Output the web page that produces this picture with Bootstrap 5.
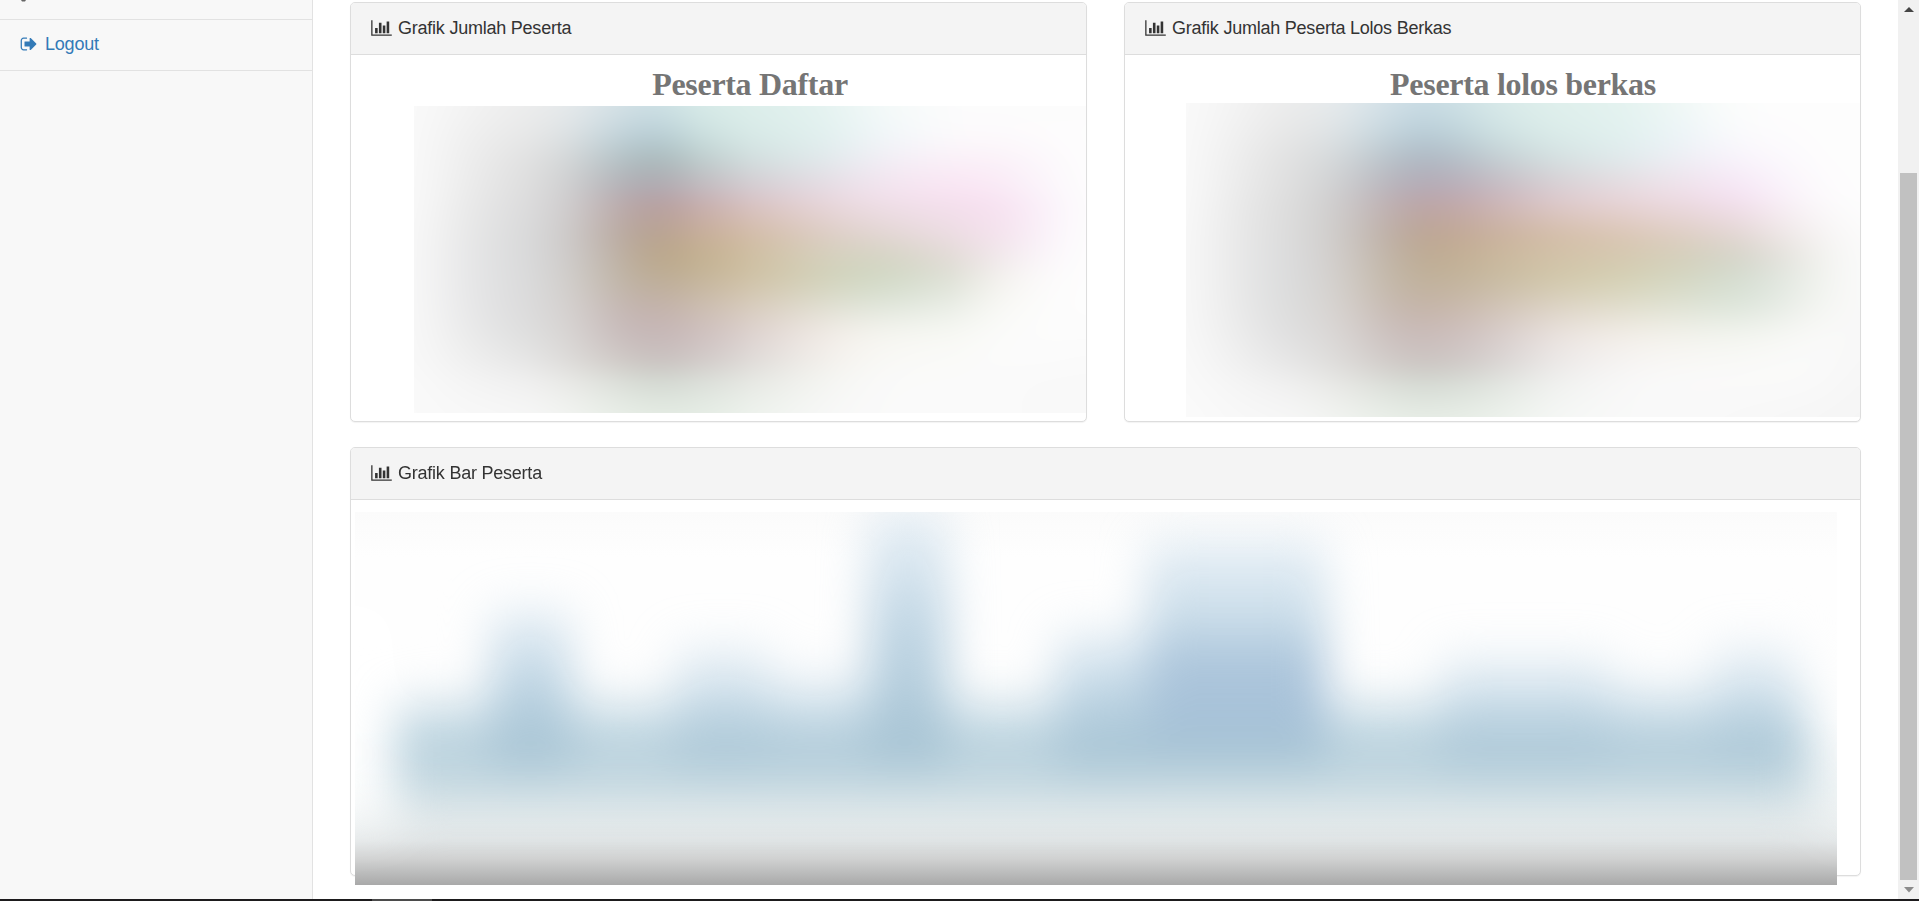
<!DOCTYPE html>
<html lang="id">
<head>
<meta charset="utf-8">
<title>Grafik Peserta</title>
<link href="https://cdn.jsdelivr.net/npm/bootstrap@5.3.0/dist/css/bootstrap.min.css" rel="stylesheet">
<style>
body{font-family:"Liberation Sans",Arial,sans-serif;font-size:18px;line-height:26px;color:#333;background:#fff;height:901px}
svg,canvas{display:block}
.side{width:313px;background:#f8f8f8;border-right:1px solid #e2e2e2}
.side .cell{border-bottom:1px solid #e2e2e2}
.side .prev{height:20px;padding-left:21px}
.side .out{height:51px;padding:0 0 3px 20px;color:#337ab7;gap:7px;letter-spacing:-.2px}
.page{padding:2px 36px 0 37px}
.panels{gap:25px 37px;grid-template-columns:737px 737px}
.panel{border:1px solid #ddd;border-radius:5px;box-shadow:0 1px 1px rgba(0,0,0,.05);height:420px;background:#fff}
.panel-top{height:52px;background:#f4f4f4;border-bottom:1px solid #ddd;border-radius:4px 4px 0 0;padding:0 20px 2px;gap:6px;letter-spacing:-.23px}
.wide{grid-column:span 2;height:429px}
.ttl{font:bold 32px/38px "Liberation Serif","Times New Roman",serif;color:#757575;text-align:center;letter-spacing:-.31px}
.t1{padding:10px 0 3px 63px}
.t2{padding:10px 0 0 61px}
.c1{margin-left:63px}.c2{margin-left:61px}
.c3{margin:12px 0 0 4px;position:relative}
.sbar{width:21px;background:#f1f1f1}
.thumb{width:17px;height:707px;margin:160px 0 7px;background:#c1c1c1}
.task{height:2px;background:#1d1b1d}
.task i{display:block;width:60px;height:2px;margin-left:372px;background:#4b4b4b}
</style>
</head>
<body class="d-flex flex-column overflow-hidden">
<svg width="0" height="0" class="position-absolute"><symbol id="bars" viewBox="0 0 2048 1792"><path d="M640 896v512h-256v-512h256zm384-512v1024h-256v-1024h256zm1024 1152v128h-2048v-1536h128v1408h1920zm-640-896v768h-256v-768h256zm384-384v1152h-256v-1152h256z"/></symbol></svg>
<div class="d-flex flex-grow-1 overflow-hidden">
  <aside class="side flex-shrink-0">
    <div class="cell prev"><svg width="6" height="2"><path d="M0 0h5l-1 1.5h-3z" fill="#666"/></svg></div>
    <div class="cell out d-flex align-items-center">
      <svg width="18" height="18" viewBox="0 0 1792 1792" fill="currentColor"><path d="M704 1440q0 4 1 20t.5 26.5-3 23.5-10 19.5-20.5 6.5h-320q-119 0-203.5-84.5t-84.5-203.5v-704q0-119 84.5-203.5t203.5-84.5h320q13 0 22.5 9.5t9.5 22.5q0 4 1 20t.5 26.5-3 23.5-10 19.5-20.5 6.5h-320q-66 0-113 47t-47 113v704q0 66 47 113t113 47h312l11.5 1 11.5 3 8 5.5 7 9 2 13.5zm928-544q0 26-19 45l-544 544q-19 19-45 19t-45-19-19-45v-288h-448q-26 0-45-19t-19-45v-384q0-26 19-45t45-19h448v-288q0-26 19-45t45-19 45 19l544 544q19 19 19 45z"/></svg>
      <span>Logout</span>
    </div>
  </aside>
  <main class="page flex-grow-1">
    <div class="panels d-grid">
      <section class="panel">
        <div class="panel-top d-flex align-items-center"><svg width="21" height="18" fill="#333"><use href="#bars"/></svg><span>Grafik Jumlah Peserta</span></div>
        <div class="ttl t1">Peserta Daftar</div>
        <canvas class="c1" id="daftar" width="672" height="307"></canvas>
      </section>
      <section class="panel">
        <div class="panel-top d-flex align-items-center"><svg width="21" height="18" fill="#333"><use href="#bars"/></svg><span>Grafik Jumlah Peserta Lolos Berkas</span></div>
        <div class="ttl t2">Peserta lolos berkas</div>
        <canvas class="c2" id="lolos" width="674" height="314"></canvas>
      </section>
      <section class="panel wide">
        <div class="panel-top d-flex align-items-center"><svg width="21" height="18" fill="#333"><use href="#bars"/></svg><span>Grafik Bar Peserta</span></div>
        <svg class="c3" width="1482" height="373" viewBox="355 512 1482 373">
          <defs>
            <linearGradient id="floor" x1="0" y1="512" x2="0" y2="885" gradientUnits="userSpaceOnUse">
              <stop offset="0" stop-color="#fbfbfb"/><stop offset=".12" stop-color="#fefefe"/><stop offset=".55" stop-color="#fefefe"/><stop offset=".74" stop-color="#e9eff0"/><stop offset=".84" stop-color="#e5eaeb"/><stop offset=".88" stop-color="#e1e5e6"/><stop offset=".93" stop-color="#d0d1d1"/><stop offset="1" stop-color="#a9a9a9"/>
            </linearGradient>
            <linearGradient id="fade" x1="0" y1="0" x2="0" y2="1"><stop offset="0" stop-color="#c4daea" stop-opacity=".4"/><stop offset=".45" stop-color="#b4cedf" stop-opacity=".85"/><stop offset="1" stop-color="#a5c2d2"/></linearGradient>
            <linearGradient id="low" x1="0" y1="0" x2="0" y2="1"><stop offset="0" stop-color="#c4d9e4" stop-opacity=".6"/><stop offset=".4" stop-color="#bad2de"/><stop offset="1" stop-color="#bed3dc"/></linearGradient>
            <filter id="soft" filterUnits="userSpaceOnUse" x="200" y="350" width="1800" height="620" color-interpolation-filters="sRGB"><feGaussianBlur stdDeviation="23 24"/></filter>
          </defs>
          <path fill="url(#floor)" d="M355 512h1482v373H355z"/>
          <g filter="url(#soft)">
            <path fill="#fff" opacity=".85" d="M270 600h128v225H270z"/>
            <path fill="#fff" opacity=".45" d="M1818 600h90v230h-90z"/>
            <path fill="url(#low)" d="M395 700H1810V798H395z"/>
            <path fill="url(#fade)" d="M490 610h82v157h-82z"/>
            <path fill="url(#fade)" opacity=".75" d="M675 645h95v123h-95z"/>
            <path fill="url(#fade)" opacity=".5" d="M770 670h98v100h-98z"/>
            <path fill="url(#fade)" d="M868 512h80v255h-80z"/>
            <path fill="url(#fade)" d="M1056 633h90v137h-90z"/>
            <path fill="url(#fade)" d="M1146 540h180v227h-180z"/>
            <path fill="#a4bfd9" opacity=".65" d="M1150 645h175v95h-175z"/>
            <path fill="url(#fade)" opacity=".75" d="M1440 655h170v115h-170z"/>
            <path fill="url(#fade)" opacity=".4" d="M1610 675h100v95h-100z"/>
            <path fill="url(#fade)" opacity=".75" d="M1712 645h84v123h-84z"/>
          </g>
        </svg>
      </section>
    </div>
  </main>
  <div class="sbar d-flex flex-column align-items-center flex-shrink-0">
    <svg class="flex-shrink-0" width="10" height="13"><path d="M5 7l5 5H0z" fill="#444"/></svg>
    <div class="thumb flex-shrink-0"></div>
    <svg class="flex-shrink-0" width="10" height="6"><path d="M0 0h10L5 5.5z" fill="#8b8b8b"/></svg>
  </div>
</div>
<div class="task flex-shrink-0"><i></i></div>
<script src="https://cdn.jsdelivr.net/npm/bootstrap@5.3.0/dist/js/bootstrap.bundle.min.js"></script>
<script>
// Paints a smooth colour field from a coarse grid of samples (cubic B-spline on both axes).
function curve(a,b,c,d,t){const s=1-t;return (s*s*s*a+(3*t*t*t-6*t*t+4)*b+(3*s*s*s-6*s*s+4)*c+t*t*t*d)/6}
function paint(id,xs,ys,text){
  const g=text.trim().split('\n').map(r=>r.trim().split(/\s+/).map(h=>[0,2,4].map(i=>parseInt(h.substr(i,2),16))));
  const cv=document.getElementById(id),w=cv.width,h=cv.height,cx=cv.getContext('2d'),im=cx.createImageData(w,h);
  const loc=(s,n)=>Array.from({length:n},(_,p)=>{
    const v=s[0]+(s[s.length-1]-s[0])*p/(n-1);let i=0;
    while(i<s.length-2&&v>s[i+1])i++;
    return [i,(v-s[i])/(s[i+1]-s[i])]});
  const lx=loc(xs,w),ly=loc(ys,h),cl=(v,n)=>Math.max(0,Math.min(n-1,v));
  for(let y=0;y<h;y++){
    const [j,v]=ly[y];
    const row=xs.map((_,i)=>[0,1,2].map(k=>curve(...[-1,0,1,2].map(o=>g[cl(j+o,ys.length)][i][k]),v)));
    for(let x=0;x<w;x++){
      const [i,u]=lx[x],q=(y*w+x)*4,n=xs.length;
      for(let k=0;k<3;k++)im.data[q+k]=curve(row[cl(i-1,n)][k],row[i][k],row[i+1][k],row[cl(i+2,n)][k],u);
      im.data[q+3]=255;
    }
  }
  cx.putImageData(im,0,0);
}
const ys=[318,400,480,560,620,700,770,840,920,1000,1080,1150,1240];
paint('daftar',[135,250,370,465,560,650,740,850,1000,1130,1270,1370,1470,1555],ys,`
fafafa f3f3f3 ececec e6eaec d5e1e6 cbdfe4 d8ebe8 dceeea e4f2f0 f5faf9 fcfcfc fcfcfc fcfcfc fcfcfc
fafafa efefef e8e8e8 dde2e4 c3d5dc b6ccd5 cbe0df d9ebe8 e0f0ee f1f7fa fcfbfc fdfafc fdfcfd fdfdfd
fafafa ededed e1e1e1 d3d6d7 b4c2c6 a5b6b7 bccccc d2dfdf e0eaec f3eef6 fbf0f8 faf0f8 fcf8fc fdfdfd
fafafa ebebeb dedede cfcfd0 b4b1b6 aea5ae c2b8bd d5cbd1 e6dbe3 f3e4ef fae4f3 f9e8f5 fbf5fb fdfdfd
fafafa e9e9e9 dcdcdd cfcdce bcacad b59c9d c7adad d9c2c2 e8d6da efdfe8 f4dfed f7e0f0 faf1fa fdfcfd
f9f9f9 e7e7e7 d9dadb cdcac9 baaba3 b6a18e c7ad98 d3bca5 ddcdc5 e2d6d3 eddde4 f4e0ec faf2fa fdfdfd
f9f9f9 e6e6e7 d9dadb cecbca bdb1a7 baa588 c2b190 cfbea0 d6d2bf d3d4c2 e2dad6 f1e8eb fbf6fb fdfdfd
f9f9f9 e6e6e7 dadbdc d1cecb c0b6a9 bcac95 c4b49a d1c2a5 d2d3bb cfd9c5 dde0d5 f4f2ee fcfbfb fdfdfd
f9f9f9 e7e7e8 dbdbdc d5d1cf c5b8b4 c2b0a9 cbbdb0 d9ccbd e1e0d3 dfe6db e9ede6 f9f9f5 fcfcfc fdfdfd
f9f9f9 eaeaea dddede d8d5d3 c8bcbc c5b5b6 cdbebe ddd1cf f3ece7 f6f6f1 f7f8f3 fbfbfa fcfcfc fcfcfc
f9f9f9 efefef e6e6e6 dcdad8 d0cac6 c7bfbd d0c8c6 dedad7 f4f1ec f9f9f6 fafaf8 fbfbfb fbfbfb fafafa
fafafa f4f4f4 f0f0f0 e9e9e6 dce0da d1d8d0 dadfd9 e6e8e3 f5f6f2 fafafa fafafa fafafa f9f9f9 f9f9f9
fafafa f8f8f8 f7f7f7 f2f4f1 e9efe8 e5ece4 e5ede5 eef3ed f8f8f8 fafafa fafafa fafafa f9f9f9 f9f9f9`);
paint('lolos',[148,250,350,440,535,625,740,860,1000,1120,1210,1290,1375,1453],ys,`
fafafa f3f3f3 ebebeb e7ebed d3e1e8 c6dae3 d8e9e9 e0f0ec e3f2ef f3f9f7 fcfdfc fdfdfd fdfdfd fdfdfd
fafafa f0f0f0 e6e6e6 dfe4e6 c5d7df b5cbd6 cee2e3 dcedea e1f1ef eef6f9 fafbfc fdfcfd fdfdfd fdfdfd
fafafa ededed e0e0e0 d5d9db b8c3ca aab4c0 c1cdd2 d4e1e1 e0ecee f0eff6 f8f3fb fbf8fd fdfdfd fdfdfd
fafafa ebebeb dedede d0d1d2 b8b4bb b3a6b3 c4b7bf d9ced3 e7dce0 f1e2ec f5e5f5 f9f0fa fdfbfd fdfdfd
fafafa e9e9e9 dcdcdc cfcece beb0b2 bba1a3 cbb3b5 dec9cb e8d4d7 ecdae2 f2deec f7ebf4 fbf9fb fdfdfd
f9f9f9 e8e8e8 dbdbdb cfcdcb bdafa6 bca38f c9b09d d4bda7 dbc6b5 dfcfc5 e2d5d2 ede4e3 f6f3f3 fbfbfb
f9f9f9 e8e8e8 dadbdc d2cecc c0b4a8 bda98f c9b79c d2c2a8 d5c9b0 d4d1bd d4d4c8 e0ded8 f2f2ee fafafa
f9f9f9 e8e8e8 dadbdc d4d1ce c3b8a9 bfaf97 c7baa2 d2c8aa d5d2b5 d4d8c5 d4ddd0 dee5dd f1f3ee fafafa
f9f9f9 e9e9e9 dbdcdc d8d4d1 c7bab2 c4b2a6 d0c2b6 ded4c7 e2dfce e0e4d7 dde6db e5eae3 f5f6f2 f9f9f9
f9f9f9 ececec dededf dbd8d6 cbc0be c9b9b8 d4c9c8 ebe3e0 f4efe9 f3f3ed f3f5ef f6f7f3 fafaf9 f8f8f8
fafafa f0f0f0 e6e6e6 dedddb d1cbc8 c9c2bf d6d1cf ece9e8 f7f5f4 f9f8f6 f9f9f7 fafaf9 fafafa f7f7f7
fafafa f5f5f5 f0f0f0 e9e9e6 dbdfd9 d3dad2 dfe4de f1f2f0 f9f9f9 fafafa fafafa fafafa f9f9f9 f6f6f6
fbfbfb f8f8f8 f7f7f7 f2f4f1 eaf0e9 e7ede6 ebf1ea f6f8f6 f9f9f9 f9f9f9 f8f8f8 f7f7f7 f6f6f6 f5f5f5`);
</script>
</body>
</html>
